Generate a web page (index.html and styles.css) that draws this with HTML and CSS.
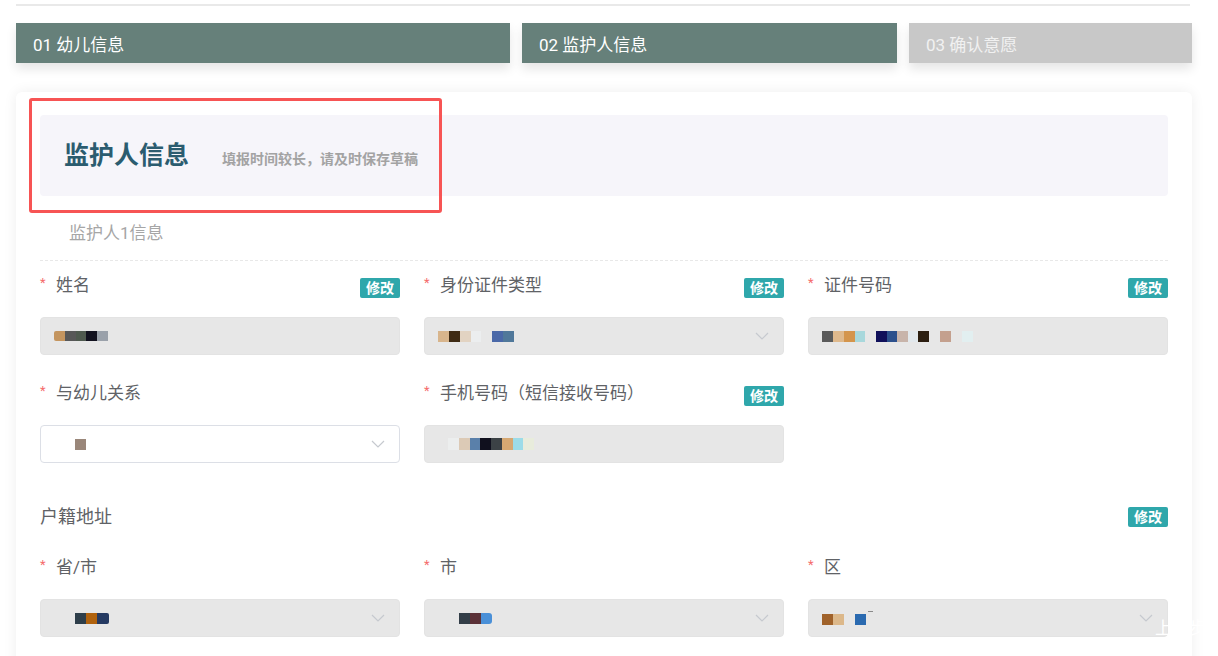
FILE: index.html
```html
<!DOCTYPE html>
<html lang="zh-CN">
<head>
<meta charset="utf-8">
<title>监护人信息</title>
<link rel="stylesheet" href="styles.css">
</head>
<body>
<div class="topline"></div>
<div class="steps">
  <div class="step step-1 done">01 幼儿信息</div>
  <div class="step step-2 done">02 监护人信息</div>
  <div class="step step-3">03 确认意愿</div>
</div>

<div class="card">
  <div class="banner">
    <div class="banner-inner">
      <h1 class="banner-title">监护人信息</h1>
      <span class="banner-tip">填报时间较长，请及时保存草稿</span>
    </div>
  </div>

  <div class="sub-title">监护人1信息</div>

  <div class="grid">
    <div class="item">
      <div class="label-row"><span class="label"><span class="req">*</span>姓名</span><span class="edit">修改</span></div>
      <div class="input disabled">
        <svg class="mosaic" width="54" height="10" viewBox="0 0 54 10"><rect x="0" y="0" width="11" height="10" rx="2" fill="#c4955f"/><rect x="8" y="0" width="3" height="10" fill="#c4955f"/><rect x="11" y="0" width="11" height="10" fill="#585858"/><rect x="22" y="0" width="10" height="10" fill="#4f5a4f"/><rect x="32" y="0" width="11" height="10" fill="#12121f"/><rect x="43" y="0" width="11" height="10" fill="#9aa1aa"/></svg>
      </div>
    </div>
    <div class="item">
      <div class="label-row"><span class="label"><span class="req">*</span>身份证件类型</span><span class="edit">修改</span></div>
      <div class="input disabled">
        <svg class="mosaic" width="76" height="11" viewBox="0 0 76 11"><rect x="0" y="0" width="11" height="11" fill="#d8b58c"/><rect x="11" y="0" width="11" height="11" fill="#3f2b14"/><rect x="22" y="0" width="11" height="11" fill="#e2d3c2"/><rect x="33" y="0" width="10" height="11" fill="#eceeef"/><rect x="54" y="0" width="11" height="11" fill="#4a68a8"/><rect x="65" y="0" width="11" height="11" fill="#50789a"/></svg>
        <svg class="chev" width="14" height="8" viewBox="0 0 14 8"><path d="M1 1 L7 7 L13 1" fill="none" stroke="#c6c9cf" stroke-width="1.2"/></svg>
      </div>
    </div>
    <div class="item">
      <div class="label-row"><span class="label"><span class="req">*</span>证件号码</span><span class="edit">修改</span></div>
      <div class="input disabled">
        <svg class="mosaic" width="151" height="11" viewBox="0 0 151 11"><rect x="0" y="0" width="11" height="11" fill="#5a5a5a"/><rect x="11" y="0" width="11" height="11" fill="#dfb98c"/><rect x="22" y="0" width="11" height="11" fill="#d4954c"/><rect x="33" y="0" width="10" height="11" fill="#a8d8dc"/><rect x="54" y="0" width="11" height="11" fill="#10105a"/><rect x="65" y="0" width="10" height="11" fill="#2c508c"/><rect x="75" y="0" width="11" height="11" fill="#c8b4aa"/><rect x="86" y="0" width="10" height="11" fill="#e2e8ec"/><rect x="96" y="0" width="11" height="11" fill="#2c1e10"/><rect x="118" y="0" width="11" height="11" fill="#c4a08e"/><rect x="140" y="0" width="11" height="11" fill="#e2eff0"/></svg>
      </div>
    </div>

    <div class="item">
      <div class="label-row"><span class="label"><span class="req">*</span>与幼儿关系</span></div>
      <div class="input plain">
        <svg class="mosaic shift-lg" width="11" height="11" viewBox="0 0 11 11"><rect x="0" y="0" width="11" height="11" fill="#9a877a"/></svg>
        <svg class="chev" width="14" height="8" viewBox="0 0 14 8"><path d="M1 1 L7 7 L13 1" fill="none" stroke="#c6c9cf" stroke-width="1.2"/></svg>
      </div>
    </div>
    <div class="item">
      <div class="label-row"><span class="label"><span class="req">*</span>手机号码（短信接收号码）</span><span class="edit">修改</span></div>
      <div class="input disabled">
        <svg class="mosaic shift-md" width="86" height="12" viewBox="0 0 86 12"><rect x="0" y="0" width="11" height="12" fill="#eceeee"/><rect x="11" y="0" width="11" height="12" fill="#dccab6"/><rect x="22" y="0" width="10" height="12" fill="#5a80aa"/><rect x="32" y="0" width="11" height="12" fill="#10101e"/><rect x="43" y="0" width="11" height="12" fill="#3c4246"/><rect x="54" y="0" width="11" height="12" fill="#d6a872"/><rect x="65" y="0" width="10" height="12" fill="#9cdce8"/><rect x="75" y="0" width="11" height="12" fill="#e8ecdc"/></svg>
      </div>
    </div>
    <div class="item"></div>
  </div>

  <div class="addr-head">
    <span class="addr-title">户籍地址</span>
    <span class="edit flat">修改</span>
  </div>

  <div class="grid addr-grid">
    <div class="item">
      <div class="label-row"><span class="label"><span class="req">*</span>省/市</span></div>
      <div class="input disabled">
        <svg class="mosaic shift-lg" width="34" height="11" viewBox="0 0 34 11"><rect x="0" y="0" width="11" height="11" fill="#2e3e4a"/><rect x="11" y="0" width="11" height="11" fill="#b0620e"/><rect x="22" y="0" width="10" height="11" fill="#253a62"/><rect x="28" y="0" width="6" height="11" rx="2" fill="#253a62"/></svg>
        <svg class="chev" width="14" height="8" viewBox="0 0 14 8"><path d="M1 1 L7 7 L13 1" fill="none" stroke="#c6c9cf" stroke-width="1.2"/></svg>
      </div>
    </div>
    <div class="item">
      <div class="label-row"><span class="label"><span class="req">*</span>市</span></div>
      <div class="input disabled">
        <svg class="mosaic shift-lg" width="33" height="11" viewBox="0 0 33 11"><rect x="0" y="0" width="11" height="11" fill="#333e48"/><rect x="11" y="0" width="11" height="11" fill="#5c3238"/><rect x="22" y="0" width="6" height="11" fill="#4a90d8"/><rect x="22" y="0" width="11" height="11" rx="3" fill="#4a90d8"/></svg>
        <svg class="chev" width="14" height="8" viewBox="0 0 14 8"><path d="M1 1 L7 7 L13 1" fill="none" stroke="#c6c9cf" stroke-width="1.2"/></svg>
      </div>
    </div>
    <div class="item">
      <div class="label-row"><span class="label"><span class="req">*</span>区</span></div>
      <div class="input disabled">
        <svg class="mosaic" width="52" height="14" viewBox="0 0 52 14"><rect x="0" y="3" width="11" height="11" fill="#a0622a"/><rect x="11" y="3" width="11" height="11" fill="#dcb88a"/><rect x="33" y="3" width="11" height="11" fill="#2a6ab0"/><rect x="46" y="0" width="5" height="1" fill="#8a8a8a"/></svg>
        <svg class="chev" width="14" height="8" viewBox="0 0 14 8"><path d="M1 1 L7 7 L13 1" fill="none" stroke="#c6c9cf" stroke-width="1.2"/></svg>
      </div>
    </div>
  </div>
</div>

<div class="annot"></div>
<span class="ghost">上一步</span>
</body>
</html>
```

FILE: styles.css
```css
html, body {
  margin: 0;
  padding: 0;
}
body {
  width: 1218px;
  height: 656px;
  overflow: hidden;
  position: relative;
  background: #ffffff;
  font-family: Roboto, "Noto Sans CJK SC", "Noto Sans", sans-serif;
}

.topline {
  margin: 4px 28px 0 16px;
  height: 2px;
  background: #e9e9e9;
}

.steps {
  display: flex;
  gap: 12px;
  margin: 17px 0 0 16px;
}
.step {
  box-sizing: border-box;
  height: 40px;
  display: flex;
  align-items: center;
  padding-left: 17px;
  font-size: 17px;
  color: #ffffff;
  box-shadow: 0 6px 10px rgba(0, 0, 0, 0.10);
}
.step-1 { width: 494px; }
.step-2 { width: 375px; }
.step-3 {
  width: 283px;
  background: #c8c8c8;
  color: #f1f1f1;
}
.done { background: #66807a; }

.card {
  box-sizing: border-box;
  margin: 29px 0 0 16px;
  width: 1176px;
  padding: 23px 24px 40px;
  background: #ffffff;
  border-radius: 6px;
  box-shadow: 0 0 14px rgba(0, 0, 0, 0.07);
}

.banner {
  height: 81px;
  background: #f6f5fa;
  border-radius: 4px;
  display: flex;
  align-items: center;
  padding-left: 24px;
}
.banner-inner {
  display: flex;
  align-items: baseline;
  gap: 33px;
}
.banner-title {
  margin: 0;
  font-size: 25px;
  line-height: 34px;
  font-weight: 700;
  color: #2b5c6f;
}
.banner-tip {
  font-size: 14px;
  font-weight: 700;
  color: #a3a3a3;
}

.sub-title {
  padding: 25px 0 15px 29px;
  line-height: 24px;
  font-size: 17px;
  color: #a6a6a6;
  border-bottom: 1px dashed #e8e8e8;
}

.grid {
  display: grid;
  grid-template-columns: repeat(3, 360px);
  column-gap: 24px;
  row-gap: 14px;
}
.item {
  padding-top: 12px;
}
.label-row {
  display: flex;
  justify-content: space-between;
  align-items: flex-start;
  height: 24px;
  margin-bottom: 20px;
}
.label {
  display: flex;
  font-size: 17px;
  line-height: 24px;
  color: #606266;
}
.req {
  width: 16px;
  font-size: 13px;
  line-height: 20px;
  color: #f56c6c;
}
.edit {
  margin-top: 5px;
  width: 40px;
  height: 20px;
  border-radius: 2px;
  background: #2fa7ab;
  color: #ffffff;
  font-size: 14px;
  font-weight: 700;
  display: flex;
  align-items: center;
  justify-content: center;
  line-height: 1;
}
.edit.flat { margin-top: 0; }

.input {
  box-sizing: border-box;
  height: 38px;
  border-radius: 4px;
  display: flex;
  align-items: center;
  justify-content: space-between;
  padding: 0 14px 0 13px;
}
.disabled {
  background: #e7e7e7;
  border: 1px solid #e3e3e3;
}
.plain {
  background: #ffffff;
  border: 1px solid #dcdfe6;
}
.mosaic { display: block; }
.shift-lg { margin-left: 21px; }
.shift-md { margin-left: 10px; }
.chev { display: block; flex-shrink: 0; }

.addr-head {
  display: flex;
  justify-content: space-between;
  align-items: center;
  height: 24px;
  margin-top: 42px;
}
.addr-title {
  font-size: 18px;
  line-height: 24px;
  color: #606266;
}
.addr-grid {
  padding-top: 14px;
}

.annot {
  position: absolute;
  left: 29px;
  top: 98px;
  width: 413px;
  height: 115px;
  box-sizing: border-box;
  border: 3px solid #f75454;
  border-radius: 3px;
}
.ghost {
  position: absolute;
  left: 1155px;
  top: 614px;
  font-size: 17px;
  color: #ffffff;
}
```
